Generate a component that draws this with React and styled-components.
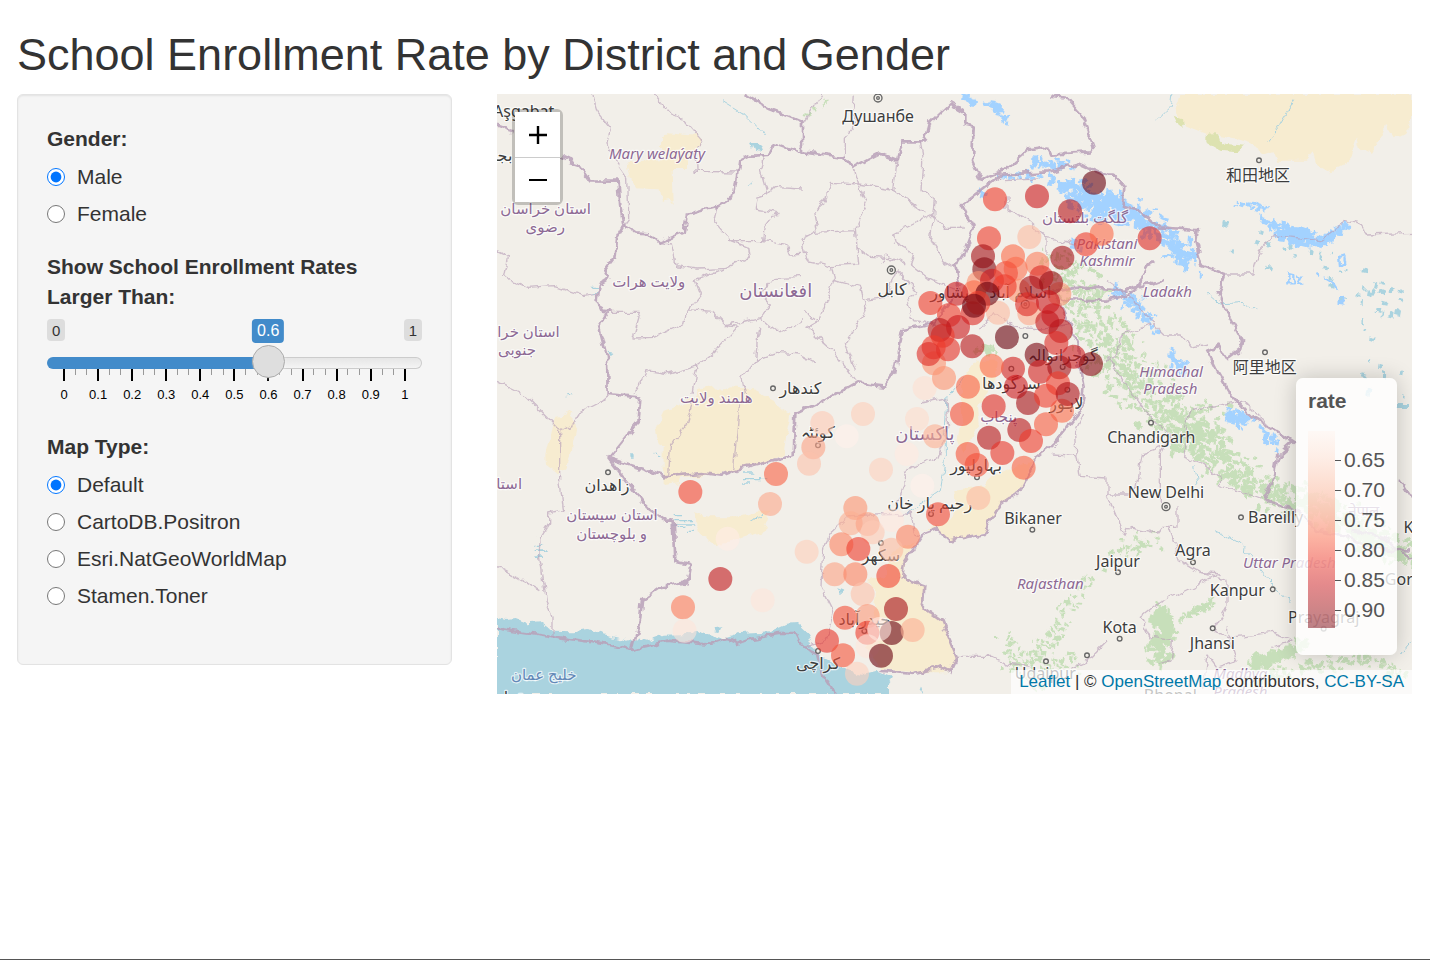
import React, { useState } from "react";
import styled, { createGlobalStyle } from "styled-components";

const GlobalStyle = createGlobalStyle`
  *, *::before, *::after { box-sizing: border-box; }
  body {
    margin: 0;
    background: #fff;
    color: #333;
    font: 21px/30px "Liberation Sans", Arial, sans-serif;
  }
`;

const Page = styled.div`
  min-height: 100vh;
  padding: 30px 18px 0 17px;
  border-bottom: 1px solid #555;
`;

const Title = styled.h2`
  margin: 0 0 14px;
  font-size: 45px;
  font-weight: 400;
  line-height: 50px;
`;

const Row = styled.div`
  display: grid;
  grid-template-columns: repeat(12, minmax(0, 1fr));
  column-gap: 45px;
  align-items: start;
`;

const Sidebar = styled.form`
  grid-column: span 4;
  padding: 29px 29px 30px;
  background: #f5f5f5;
  border: 1px solid #e3e3e3;
  border-radius: 6px;
  box-shadow: inset 0 1px 2px rgba(0, 0, 0, 0.08);
`;

const Group = styled.fieldset`
  min-width: 0;
  margin: 0 0 23px;
  padding: 0;
  border: 0;
`;

const Legend = styled.legend`
  padding: 0;
  margin-bottom: 8px;
  font-weight: 700;
`;

const Options = styled.div`
  display: flex;
  flex-direction: column;
  gap: 7px;
`;

const Option = styled.label`
  display: flex;
  align-items: center;
  gap: 12px;
`;

const Radio = styled.input`
  width: 18px;
  height: 18px;
  margin: 0;
`;

const SliderLabel = styled.label`
  display: block;
  margin-bottom: 7px;
  font-weight: 700;
`;

const Bounds = styled.div`
  position: relative;
  display: flex;
  justify-content: space-between;
  height: 26px;
  font-size: 16px;
  line-height: 24px;
`;

const Bound = styled.span`
  height: 22px;
  padding: 0 5px;
  border-radius: 4px;
  background: #ddd;
  font-size: 15px;
`;

const Bubble = styled.output`
  position: absolute;
  top: 0;
  height: 24px;
  padding: 0 5px;
  border-radius: 4px;
  background: #428bca;
  color: #fff;
  transform: translateX(-50%);
`;

const Range = styled.input`
  position: relative;
  z-index: 1;
  display: block;
  width: 100%;
  height: 36px;
  margin: 0;
  background: none;
  appearance: none;

  &::-webkit-slider-runnable-track {
    height: 12px;
    border: 1px solid transparent;
    border-radius: 8px;
    background:
      linear-gradient(#428bca, #428bca) 0 0 / var(--fill) 100% no-repeat border-box,
      linear-gradient(#e6e6e6, #f4f4f4) padding-box,
      linear-gradient(#ccc, #ccc) border-box;
  }
  &::-webkit-slider-thumb {
    width: 33px;
    height: 33px;
    margin-top: -13px;
    border: 1px solid #ababab;
    border-radius: 50%;
    background: #dedede;
    box-shadow: 1px 1px 3px rgba(255, 255, 255, 0.3);
    appearance: none;
  }
`;

const Scale = styled.div`
  display: flex;
  justify-content: space-between;
  height: 40px;
  margin: -12px 16px 0;
`;

const Tick = styled.span`
  display: flex;
  flex-direction: column;
  align-items: center;
  width: 2px;
  color: #000;
  font-size: 13px;
  line-height: 16px;

  &::before {
    content: "";
    flex: none;
    width: ${(p) => (p.$major ? 2 : 1)}px;
    height: ${(p) => (p.$major ? 12 : 6)}px;
    margin-bottom: 6px;
    background: ${(p) => (p.$major ? "#000" : "#999")};
  }
`;

const MapPane = styled.section`
  position: relative;
  grid-column: span 8;
  height: 600px;
  overflow: hidden;
  background: #f2efe9;
`;

const MapDrawing = styled.svg`
  display: block;
  width: 100%;
  height: 100%;
`;

const ZoomBar = styled.div`
  position: absolute;
  top: 15px;
  left: 15px;
  border: 3px solid rgba(0, 0, 0, 0.2);
  border-radius: 6px;
  background-clip: padding-box;
`;

const ZoomButton = styled.button`
  display: grid;
  place-items: center;
  width: 45px;
  height: 45px;
  padding: 0;
  border: 0;
  background: #fff;

  & + & { border-top: 1px solid #ccc; }
`;

const RateLegend = styled.div`
  position: absolute;
  right: 15px;
  bottom: 39px;
  width: 101px;
  height: 277px;
  padding: 8px 12px;
  border-radius: 7px;
  background: rgba(255, 255, 255, 0.8);
  box-shadow: 0 0 22px rgba(0, 0, 0, 0.2);
  color: #555;
`;

const RateTitle = styled.div`
  margin-bottom: 15px;
  font-weight: 700;
`;

const RateScale = styled.div`
  display: flex;
`;

const RateRamp = styled.div`
  width: 27px;
  height: 197px;
  opacity: 0.5;
  background: linear-gradient(#fff5f0, #fee0d2 13%, #fcbba1 29%, #fc9272 43%, #fb6a4a 54%, #ef3b2c 65%, #cb181d 78%, #a50f15 89%, #7a0510);
`;

const RateValues = styled.ul`
  margin: 0;
  padding: 14px 0 0;
  list-style: none;
`;

const RateValue = styled.li`
  display: flex;
  align-items: center;
  gap: 3px;

  &::before {
    content: "";
    width: 6px;
    height: 1px;
    background: #555;
  }
`;

const Attribution = styled.div`
  position: absolute;
  right: 0;
  bottom: 0;
  padding: 0 8px;
  background: rgba(255, 255, 255, 0.7);
  font-size: 17px;
  line-height: 24px;
`;

const MapLink = styled.a`
  color: #0078a8;
  text-decoration: none;
`;

const CityName = styled.text`
  fill: #3d3d3d;
  stroke: rgba(255, 255, 255, 0.7);
  stroke-width: 7px;
  stroke-linejoin: round;
  paint-order: stroke;
  font-family: "Noto Sans", "DejaVu Sans", "Noto Sans CJK SC", sans-serif;
  font-size: ${(p) => p.$size || 48}px;
  text-anchor: middle;
`;

const RegionName = styled(CityName)`
  fill: ${(p) => p.$tone || "#8d6994"};
  font-size: ${(p) => p.$size || 45}px;
  font-style: ${(p) => (p.$upright ? "normal" : "italic")};
`;

const REDS = [[255, 240, 235], [254, 224, 210], [252, 187, 161], [252, 146, 114], [251, 106, 74], [239, 59, 44], [203, 24, 29], [165, 15, 21], [103, 0, 13]];

function shade(level) {
  const low = Math.floor(level);
  const high = Math.min(low + 1, 8);
  return `rgb(${REDS[low].map((c, i) => Math.round(c + (REDS[high][i] - c) * (level - low))).join(",")})`;
}

/* Marker centres per tile: x, y, shade on the reds ramp. */
const MARKERS = {
  north: [
    [368, 882, 1], [579, 316, 5], [705, 307, 6], [876, 266, 8], [804, 352, 6.5], [852, 451, 5], [899, 419, 4], [682, 429, 2],
    [561, 433, 5], [781, 491, 7], [543, 487, 7], [706, 509, 3.5], [641, 524, 3.8], [633, 487, 4], [547, 526, 7.5],
    [530, 567, 3], [650, 590, 3], [682, 658, 2.5], [772, 600, 3], [588, 656, 2], [570, 560, 6], [612, 537, 4.6],
    [718, 550, 5.5], [688, 581, 7], [608, 577, 5], [747, 567, 7.2], [516, 595, 4], [556, 599, 8], [463, 599, 6],
    [385, 627, 5], [512, 658, 5.5], [529, 626, 5], [516, 635, 8], [675, 631, 5.5], [738, 624, 6], [441, 663, 5],
    [468, 699, 6], [754, 664, 6], [736, 685, 6.2], [776, 711, 6.5], [422, 725, 5], [413, 708, 6.5], [763, 747, 5.5],
    [511, 757, 6.5], [615, 730, 8], [396, 808, 3], [438, 766, 5.3], [395, 760, 5], [380, 780, 5.5], [426, 852, 3],
    [704, 782, 7.7], [815, 788, 6], [714, 833, 5.8], [772, 820, 7], [867, 810, 7.5], [633, 824, 5.8], [569, 815, 4],
    [498, 878, 4.2], [642, 878, 6], [768, 868, 5],
  ],
  east: [[128, 433, 5.5]],
  west: [
    [580, 294, 4.8], [837, 240, 4.2], [819, 330, 2.5], [692, 434, 0.2], [670, 555, 6.3], [558, 640, 3.6], [563, 710, 0.7], [797, 619, 0.7],
  ],
  south: [
    [480, 60, 4.6], [575, 37, 5.5], [780, 50, 4], [678, 27, 7], [732, 5, 5], [797, 0, 6.8], [652, 108, 6.5], [732, 91, 4.3],
    [561, 131, 6.6], [687, 141, 5], [601, 177, 5.2], [497, 180, 4.5], [524, 213, 4.6], [665, 221, 4.2], [529, 312, 2],
    [399, 127, 2.3], [183, 60, 1.5], [61, 87, 1.6], [134, 127, 0], [34, 160, 2.6], [21, 209, 1.8], [345, 75, 1.1],
    [237, 227, 1.4], [314, 180, 0.4], [361, 275, 0], [408, 361, 4.8], [160, 342, 3], [146, 388, 2.3], [197, 390, 2.6],
    [212, 415, 1.6], [270, 378, 0.5], [318, 428, 3.4], [118, 451, 3.4], [169, 465, 5], [268, 467, 2], [14, 473, 1.5],
    [98, 541, 2.6], [160, 541, 3.4], [259, 546, 4.8], [182, 600, 1.8], [282, 645, 7], [129, 671, 4.6], [197, 666, 2.8],
    [269, 717, 8], [196, 716, 5], [332, 708, 2.3], [232, 705, 0.3], [197, 757, 0.6], [75, 740, 5.2], [123, 784, 4.5],
    [237, 785, 8], [165, 839, 1.4],
  ],
};

/* Deterministic speckles along a line, for hills and glaciers. */
function speckles(points, spread, count, size, seed) {
  let s = seed;
  const rnd = () => {
    s = (s * 16807) % 2147483647;
    return s / 2147483647;
  };
  let d = "";
  for (let i = 0; i < count; i += 1) {
    const t = rnd() * (points.length - 1);
    const k = Math.floor(t);
    const f = t - k;
    const x = points[k][0] + (points[k + 1][0] - points[k][0]) * f + (rnd() + rnd() - 1) * spread;
    const y = points[k][1] + (points[k + 1][1] - points[k][1]) * f + (rnd() + rnd() - 1) * spread;
    const w = size * (0.5 + rnd());
    const h = size * (0.5 + rnd());
    d += `M${Math.round(x)} ${Math.round(y)}l${Math.round(w)} ${Math.round(h * 0.4)} ${Math.round(-w * 0.2)} ${Math.round(h)} ${Math.round(-w)} ${Math.round(-h * 0.3)}z`;
  }
  return d;
}

const HILLS = [
  speckles([[1700, 510], [1760, 640], [1850, 760], [1930, 900], [2060, 990], [2140, 1020]], 95, 640, 10, 7),
  speckles([[2060, 1000], [2180, 1110], [2320, 1190], [2450, 1230], [2560, 1280], [2745, 1370]], 60, 520, 11, 21),
  speckles([[1830, 1400], [1900, 1350], [1980, 1330]], 40, 46, 9, 5),
  speckles([[1540, 1730], [1640, 1660], [1700, 1560], [1770, 1440]], 34, 100, 8, 9),
  speckles([[1520, 1640], [1600, 1740], [1720, 1700]], 60, 90, 9, 31),
  speckles([[1980, 1540], [2000, 1600], [1970, 1680]], 34, 120, 14, 17),
  speckles([[2050, 1560], [2150, 1520]], 16, 40, 10, 45),
  speckles([[2260, 1700], [2350, 1670], [2420, 1640]], 20, 90, 14, 41),
  speckles([[2240, 1760], [2400, 1720], [2600, 1690], [2720, 1740]], 30, 90, 10, 49),
  speckles([[2560, 1300], [2745, 1400]], 25, 70, 11, 3),
  speckles([[1445, 765], [1500, 760]], 12, 16, 10, 8),
  speckles([[920, 60], [990, 10]], 18, 12, 6, 18),
].join("");

const GLACIERS = [
  speckles([[1690, 260], [1790, 330], [1870, 330]], 50, 170, 12, 2),
  speckles([[1830, 310], [1910, 350], [2000, 420], [2080, 500]], 44, 210, 12, 12),
  speckles([[2330, 400], [2390, 420], [2440, 425]], 30, 110, 12, 22),
  speckles([[2455, 435], [2500, 420], [2540, 380]], 14, 36, 12, 32),
  speckles([[1850, 580], [1920, 630], [1970, 700]], 28, 70, 10, 42),
  speckles([[2015, 770], [2060, 820]], 20, 28, 11, 52),
  speckles([[2190, 960], [2250, 970]], 28, 48, 12, 62),
  speckles([[2290, 1010], [2340, 1040]], 22, 14, 11, 72),
  speckles([[1480, 20], [1520, 70]], 24, 22, 12, 82),
  speckles([[1400, 0], [1420, 15]], 12, 14, 12, 92),
  speckles([[1590, 195], [1720, 200]], 16, 34, 10, 13),
  speckles([[1510, 240], [1660, 242]], 12, 24, 9, 23),
  speckles([[2210, 318], [2310, 335]], 13, 18, 10, 33),
  speckles([[2295, 370], [2345, 385]], 20, 12, 11, 43),
  speckles([[1450, 285], [1460, 295]], 12, 10, 10, 53),
  speckles([[1735, 440], [1745, 450]], 18, 16, 10, 63),
].join("");

const PONDS = speckles([[2240, 440], [2420, 500], [2560, 560], [2700, 620], [2560, 760], [2700, 900]], 90, 54, 11, 77);

const CITY_DOTS = [
  [2286, 199], [2304, 775], [1962, 986], [2232, 1270], [2088, 1405], [2327, 1486], [1863, 1435], [1868, 1634], [2147, 1603],
  [1606, 1307], [1647, 1702], [333, 1135], [828, 883], [1152, 1347], [963, 1671], [963, 1054], [1440, 1150], [1543, 824],
  [1585, 726], [1697, 819], [1711, 887], [1302, 1260], [1102, 1611], [1770, 1684], [2480, 1604],
];
const CAPITAL_DOTS = [[1143, 12], [1183, 528], [2007, 1238], [1585, 631]];

const NATIONAL = [
  "M0 95L50 112M190 188L215 200 245 210 282 262 365 263 370 340 380 392 358 430 352 490 322 530 335 553 308 570 302 620 315 650 335 652 307 700 330 790 332 900",
  "M380 392L410 412 455 415 484 446 560 415 570 362 660 338 715 300 730 200 760 185 815 183 832 148 905 174 915 175",
  "M740 0L815 45 880 70 915 85 915 172 990 182 1045 190 1070 220 1150 178 1200 198 1215 145 1285 145 1300 85 1360 28 1405 55 1405 95 1430 100 1425 200 1450 256 1530 225 1600 165 1650 158 1660 182 1780 175 1790 155 1760 70 1710 12 1660 5",
  "M1450 290L1510 242 1650 235 1745 208 1830 245 1855 245 1885 280 1880 335 1930 350 1990 400 2100 408 2095 440 2115 515 2185 540 2165 590 2190 655 2235 740 2230 765 2190 795 2165 755 2130 770 2160 830 2200 900 2260 965 2390 1045 2340 1090 2330 1150 2300 1215 2400 1250 2460 1310 2560 1330 2640 1365 2745 1370",
  "M1450 290L1395 330 1430 400 1400 480 1375 520 1390 590 1310 690 1218 708 1195 835 1165 875 1080 865 1020 900 895 960 890 1080 810 1105 710 1130 670 1145 615 1137 500 1147 335 1092 425 980 430 910 332 900",
  "M335 1092L380 1150 450 1240 510 1280 530 1280 535 1400 580 1410 570 1465 485 1480 435 1515 430 1570 405 1668",
  "M1970 500L1940 550 1915 590 1830 620 1700 615 1660 595M1670 590L1720 700 1745 745 1745 800 1760 880 1750 950 1670 1050 1620 1090 1570 1190 1510 1230 1460 1320 1355 1340 1320 1305 1280 1320 1220 1410 1215 1450 1285 1475 1280 1540 1335 1580 1380 1690 1360 1735 1330 1720 1250 1740 1150 1730",
  "M1660 595L1740 580 1870 590 1960 570 2000 555M0 1601L200 1632 320 1650 405 1668 450 1658 510 1640 640 1652 690 1635 720 1650 760 1635 850 1620 900 1620 915 1650 940 1672 960 1680 975 1740 1010 1795M2560 1310L2660 1330 2745 1400M2710 1155L2745 1210",
].join("");

const PROVINCIAL = [
  "M285 0L300 50 340 100 330 150 350 190 392 250 395 370 380 392M470 0L520 60 560 75 615 140 595 170 597 232 725 234M0 470L32 485 20 550 90 580 170 575 260 605 300 598M0 862L75 900M335 655L430 655 420 690 408 732 470 730 560 690 570 650 610 600 595 560 690 520 760 490 755 460 700 440 650 380 660 338M484 446L520 450 535 515 600 525 690 520",
  "M570 650L650 655 690 695 790 670 820 630 790 600M690 695L720 700 655 770 600 815 520 840 450 830 410 900M600 815L585 900M690 440L800 440 870 455 880 480 915 478M800 440L805 400 840 355 775 345 780 310 810 300 830 280 915 285M800 184L790 230 810 300M790 670L850 720 915 680M785 700L775 800 735 850 745 900M775 800L840 775 915 780M790 600L830 550 915 548",
  "M975 0L915 95M1075 0L1070 60 1080 80 1045 130 1045 190M1070 220L1085 270 1110 325 1075 400 1080 460 1120 490 1200 495 1225 510M1200 198L1190 290 1085 270 1000 265 985 320 950 350 960 410 915 435M1270 145L1280 200 1275 290 1315 320 1310 360 1190 420 1195 450 1250 480 1240 510M1190 290L1220 310 1285 355M950 415L1075 410M1310 360L1300 440 1340 500 1370 520M1310 360L1345 400 1400 400M1080 460L1085 510 1000 515 1010 560 1090 580 1100 620 1170 610 1200 530M1090 580L1110 650 1045 750 1075 830M1010 560L965 680 930 700 1000 760 1075 860M1200 530L1260 590 1230 630 1250 680 1310 690M1240 510L1290 550 1330 570 1390 590M1155 510L1170 480 1200 495",
  "M915 435L930 500 1000 515M915 650L965 680M915 785L960 810M1530 310L1530 350 1580 370 1650 430 1740 450M1525 260L1620 255M1450 710L1490 650 1550 700 1640 705 1720 690M1650 430L1650 480",
  "M2190 540L2270 540 2290 470 2330 425 2390 430 2470 440 2550 380 2590 390 2610 420 2745 415M1830 560L1890 600 1960 680 2000 720 2050 720 2080 760 2130 750M1960 690L1870 730 1860 790 1830 800M1830 790L1890 880 1970 980 2020 1020 1990 1080 1990 1230",
  "M80 900L190 1012 240 985 250 955 300 930 335 900M188 1012L188 1160 200 1250 155 1260 155 1290 130 1330 125 1390 135 1450 145 1520 165 1570 165 1630M0 1418L60 1450 130 1490M590 925L570 990 520 1060 515 1140M728 925L710 1120",
  "M1270 930L1350 915 1355 1000 1320 1090 1220 1130 1225 1170 1200 1230M1000 1320L1060 1265 1240 1260 1250 1320 1270 1325M1000 1320L980 1360 975 1480 1010 1550 990 1630 930 1660M1670 1080L1740 1085 1750 1150 1830 1155 1830 1200 1890 1200 1920 1180 1935 1080 1990 1060M1830 1200L1880 1320 1890 1300 1980 1320 1995 1300 2040 1300 2040 1240M2015 1300L2050 1400 2110 1435 2170 1440 1980 1530 1930 1570 1960 1630 2030 1640",
  "M2110 1435L2190 1460 2190 1540 2150 1610 2200 1630 2330 1615 2390 1640 2320 1660M2190 1600L2220 1700 2160 1720 2130 1680 2120 1780M2030 1640L2020 1700 1990 1710M1380 1690L1490 1690 1530 1710 1600 1720M2070 990L2060 1090 2110 1110 2170 1150 2170 1170 2290 1215M2340 1020L2240 920 2080 950 2060 1000M1720 1720L1770 1700 1830 1640M1740 1085L1735 1010 1760 960",
].join("");

function Tile({ x = 0, y = 0, children }) {
  return <g transform={`translate(${x} ${y})`}>{children}</g>;
}

function Dots({ points }) {
  return points.map(([x, y, level]) => <circle key={`${x}-${y}`} cx={x} cy={y} r="36" fill={shade(level)} />);
}

function Cities() {
  return (
    <>
      <g fill="#f2efe9" stroke="#666" strokeWidth="4">
        {CITY_DOTS.map(([x, y]) => <circle key={`${x}-${y}`} cx={x} cy={y} r="7" />)}
        {CAPITAL_DOTS.map(([x, y]) => (
          <g key={x}>
            <circle cx={x} cy={y} r="12" />
            <circle cx={x} cy={y} r="4" />
          </g>
        ))}
      </g>
      <CityName x="80" y="68">Aşgabat</CityName>
      <CityName x="-18" y="200">بجنورد</CityName>
      <CityName x="1143" y="83">Душанбе</CityName>
      <CityName x="2283" y="262">和田地区</CityName>
      <CityName x="2303" y="838">阿里地区</CityName>
      <CityName x="1185" y="602">کابل</CityName>
      <CityName x="910" y="900">کندهار</CityName>
      <CityName x="962" y="1033">کوئٹہ</CityName>
      <CityName x="1358" y="612">پشاور</CityName>
      <CityName x="1570" y="612">اسلام آباد</CityName>
      <CityName x="1697" y="800">گوجرانوالہ</CityName>
      <CityName x="1543" y="884">سرگودها</CityName>
      <CityName x="1708" y="944">لاہور</CityName>
      <CityName x="1437" y="1132">بہاولپور</CityName>
      <CityName x="1298" y="1244">رحیم یار خان</CityName>
      <CityName x="1152" y="1402">سکھر</CityName>
      <CityName x="1102" y="1592">حیدرآباد</CityName>
      <CityName x="963" y="1726">کراچی</CityName>
      <CityName x="330" y="1192">زاهدان</CityName>
      <CityName x="1963" y="1046">Chandigarh</CityName>
      <CityName x="2007" y="1211">New Delhi</CityName>
      <CityName x="1608" y="1290">Bikaner</CityName>
      <CityName x="1863" y="1418">Jaipur</CityName>
      <CityName x="2088" y="1387">Agra</CityName>
      <CityName x="2336" y="1287">Bareilly</CityName>
      <CityName x="2221" y="1507">Kanpur</CityName>
      <CityName x="1868" y="1616">Kota</CityName>
      <CityName x="2146" y="1665">Jhansi</CityName>
      <CityName x="2480" y="1586">Prayagraj</CityName>
      <CityName x="1645" y="1756">Udaipur</CityName>
      <CityName x="2794" y="1316">Kathm</CityName>
      <CityName x="2746" y="1472">Gorakh</CityName>
      <CityName x="2020" y="1822">Bhopal</CityName>
      <CityName x="82" y="1828">مسقط</CityName>
      <RegionName x="480" y="194">Mary welaýaty</RegionName>
      <RegionName $upright x="146" y="360">استان خراسان</RegionName>
      <RegionName $upright x="145" y="414">رضوی</RegionName>
      <RegionName $upright x="455" y="580">ولایت هرات</RegionName>
      <RegionName $upright $size={54} x="836" y="609">افغانستان</RegionName>
      <RegionName $upright x="52" y="728">استان خراسان</RegionName>
      <RegionName $upright x="60" y="782">جنوبی</RegionName>
      <RegionName $upright x="658" y="926">هلمند ولایت</RegionName>
      <RegionName $upright x="20" y="1186">استان</RegionName>
      <RegionName $upright x="345" y="1279">استان سیستان</RegionName>
      <RegionName $upright x="344" y="1334">و بلوچستان</RegionName>
      <RegionName $upright $size={54} x="1284" y="1038">پاکستان</RegionName>
      <RegionName $upright x="1505" y="984">پنجاب</RegionName>
      <RegionName $upright x="1764" y="388">گلگت بلتستان</RegionName>
      <RegionName x="1830" y="464">Pakistani</RegionName>
      <RegionName x="1830" y="516">Kashmir</RegionName>
      <RegionName x="2011" y="608">Ladakh</RegionName>
      <RegionName x="2022" y="848">Himachal</RegionName>
      <RegionName x="2020" y="900">Pradesh</RegionName>
      <RegionName x="1660" y="1484">Rajasthan</RegionName>
      <RegionName x="2377" y="1422">Uttar Pradesh</RegionName>
      <RegionName x="2230" y="1756">Madhya</RegionName>
      <RegionName x="2230" y="1810">Pradesh</RegionName>
      <RegionName x="2600" y="1266">नेपाल</RegionName>
      <RegionName $tone="#6288b8" $upright x="140" y="1758">خلیج عمان</RegionName>
    </>
  );
}

function Terrain() {
  return (
    <>
      <g fill="#f7ecd0">
        <path d="M2050 0L2035 50 2065 95 2130 120 2185 125 2250 145 2280 155 2295 185 2330 175 2340 200 2430 200 2450 175 2460 210 2485 225 2505 238 2515 220 2545 205 2560 190 2580 130 2590 165 2620 180 2650 130 2665 90 2690 130 2720 115 2745 90V0z" />
        <path d="M495 130L510 115 600 122 615 140 597 170 573 190 573 225 527 225 530 333 515 315 492 320 485 283 410 280 390 205 495 195z" />
        <path d="M175 968L205 965 215 945 220 970 240 990 222 1080 205 1120 180 1138 150 1115 148 1080z" />
        <path d="M475 1000L500 950 560 930 590 915 610 885 650 875 670 895 700 880 760 885 830 920 855 945 880 960 870 1010 860 1080 800 1110 670 1140 550 1150 545 1165 500 1170 500 1060 485 1050z" />
        <path d="M588 1255L640 1270 710 1270 780 1250 820 1250 800 1310 740 1330 660 1355 610 1320z" />
        <path d="M1395 855L1440 800 1500 800 1490 870 1440 940 1445 990 1400 1080 1385 1040 1395 960z" />
        <path d="M1375 1190L1450 1180 1500 1140 1610 1100 1650 1060 1605 1100 1570 1185 1510 1230 1460 1315 1360 1340 1320 1305 1270 1310 1350 1290 1380 1250z" />
        <path d="M1250 1340L1215 1445 1285 1475 1280 1540 1335 1575 1378 1690 1360 1735 1255 1735 1150 1725 1110 1660 1150 1630 1130 1560 1140 1500 1110 1460 1170 1440 1170 1380z" />
      </g>
      <g fill="#aad3df">
        <path d="M0 1568L30 1575 50 1572 90 1588 130 1585 165 1610 230 1612 270 1605 300 1618 390 1640 420 1632 450 1640 500 1622 580 1620 600 1610 680 1635 730 1620 820 1615 870 1592 900 1590 930 1618 960 1680 1020 1710 1060 1730 1100 1740 1140 1730 1185 1750 1170 1770 1170 1800H0z" />
        <path d="M760 145l22 0 18 12-10 16-18-2zM650 1602l26-2-6 14-18-2zM755 270l12-10-5 10zM332 770l18 4-16 6zM1268 1790l5-12 6 22zM530 1260h22v4h-22zM535 1275h50v4h-50zM530 1288h62v4h-62zM535 1298h30v4h-30zM570 1310h24v4h-24zM735 1135h34v4h-34zM735 1152h70v4h-70zM735 1168h24v4h-24zM110 1366h42v5h-42zM112 1384h26v5h-26zM115 1352h24v4h-24zM470 1082h28v4h-28zM400 1078h10v10h-10zM280 578h20v4h-20zM285 594h20v4h-20zM208 900h16v4h-16zM2700 930h36v12h-36zM1020 1485l20 8-8 8z" />
        <path d={PONDS} />
      </g>
      <path
        d="M675 20L740 60 770 90 800 125M765 1282L800 1260M2130 595L2170 630 2240 625 2275 650M1350 900L1345 1000 1345 1100 1330 1190 1230 1260M1400 850L1360 900M2160 1310L2230 1350 2310 1450 2380 1530M1980 80L2020 40 2025 0M2310 140L2350 90 2390 20M2090 1120L2100 1170M2710 1680L2745 1640"
        fill="none"
        stroke="#aad3df"
        strokeWidth="3"
      />
      <path d={HILLS} fill="#b5d9a5" opacity="0.7" />
      <path d="M2030 65L2055 75 2060 105 2045 95zM2125 125L2145 118 2190 150 2240 155 2220 175 2170 170 2125 145z" fill="#dde2b0" />
      <path d={GLACIERS} fill="#a3d2ff" />
      <path d="M2374 540v28h18v-24zM2400 545l16 0-12 24h18M2527 492l14-4 4 18-16 6zM2527 612l12 0 0 16-14-2zM2455 540l14 6M2485 550l20 12 15 24" fill="none" stroke="#9fcfff" strokeWidth="7" />
    </>
  );
}

function DistrictMap() {
  return (
    <MapDrawing viewBox="0 0 2745 1800" preserveAspectRatio="xMinYMin slice" role="img" aria-label="District map">
      <defs>
        <filter id="ragged" x="0" y="0" width="100%" height="100%" colorInterpolationFilters="sRGB">
          <feTurbulence type="fractalNoise" baseFrequency="0.03" numOctaves="3" seed="4" />
          <feDisplacementMap in="SourceGraphic" scale="26" xChannelSelector="R" yChannelSelector="G" />
        </filter>
      </defs>
      <g filter="url(#ragged)">
        <Terrain />
        <g fill="none" stroke="#b8a0b9" strokeLinejoin="round">
          <path d={PROVINCIAL} strokeWidth="4" opacity="0.65" />
          <path d={NATIONAL} strokeWidth="8" opacity="0.85" />
        </g>
      </g>
      <Cities />
      <g fillOpacity="0.6">
        <Tile x={915}><Dots points={MARKERS.north} /></Tile>
        <Tile x={1830}><Dots points={MARKERS.east} /></Tile>
        <Tile y={900}><Dots points={MARKERS.west} /></Tile>
        <Tile x={915} y={900}><Dots points={MARKERS.south} /></Tile>
      </g>
    </MapDrawing>
  );
}

function RadioGroup({ name, legend, options }) {
  return (
    <Group>
      <Legend>{legend}</Legend>
      <Options>
        {options.map((option, i) => (
          <Option key={option}>
            <Radio type="radio" name={name} value={option} defaultChecked={i === 0} />
            {option}
          </Option>
        ))}
      </Options>
    </Group>
  );
}

function RateSlider() {
  const [value, setValue] = useState(0.6);
  const centre = `calc(16px + (100% - 33px) * ${value})`;
  return (
    <Group as="div">
      <SliderLabel htmlFor="rate">Show School Enrollment Rates Larger Than:</SliderLabel>
      <Bounds>
        <Bound>0</Bound>
        <Bubble htmlFor="rate" style={{ left: centre }}>{value}</Bubble>
        <Bound>1</Bound>
      </Bounds>
      <Range
        id="rate"
        type="range"
        min="0"
        max="1"
        step="0.1"
        value={value}
        onChange={(e) => setValue(Number(e.target.value))}
        style={{ "--fill": centre }}
      />
      <Scale aria-hidden="true">
        {Array.from({ length: 31 }, (_, i) => (
          <Tick key={i} $major={i % 3 === 0}>{i % 3 === 0 ? i / 30 : null}</Tick>
        ))}
      </Scale>
    </Group>
  );
}

export default function App() {
  return (
    <Page>
      <GlobalStyle />
      <Title>School Enrollment Rate by District and Gender</Title>
      <Row>
        <Sidebar>
          <RadioGroup name="gender" legend="Gender:" options={["Male", "Female"]} />
          <RateSlider />
          <RadioGroup
            name="tiles"
            legend="Map Type:"
            options={["Default", "CartoDB.Positron", "Esri.NatGeoWorldMap", "Stamen.Toner"]}
          />
        </Sidebar>
        <MapPane>
          <DistrictMap />
          <ZoomBar>
            <ZoomButton type="button" aria-label="Zoom in">
              <svg width="18" height="18" viewBox="0 0 18 18"><path d="M0 9h18M9 0v18" stroke="#000" strokeWidth="2.4" /></svg>
            </ZoomButton>
            <ZoomButton type="button" aria-label="Zoom out">
              <svg width="18" height="18" viewBox="0 0 18 18"><path d="M0 9h18" stroke="#000" strokeWidth="2" /></svg>
            </ZoomButton>
          </ZoomBar>
          <RateLegend>
            <RateTitle>rate</RateTitle>
            <RateScale>
              <RateRamp />
              <RateValues>
                {["0.65", "0.70", "0.75", "0.80", "0.85", "0.90"].map((v) => <RateValue key={v}>{v}</RateValue>)}
              </RateValues>
            </RateScale>
          </RateLegend>
          <Attribution>
            <MapLink href="#leaflet">Leaflet</MapLink> | © <MapLink href="#osm">OpenStreetMap</MapLink> contributors,{" "}
            <MapLink href="#license">CC-BY-SA</MapLink>
          </Attribution>
        </MapPane>
      </Row>
    </Page>
  );
}
